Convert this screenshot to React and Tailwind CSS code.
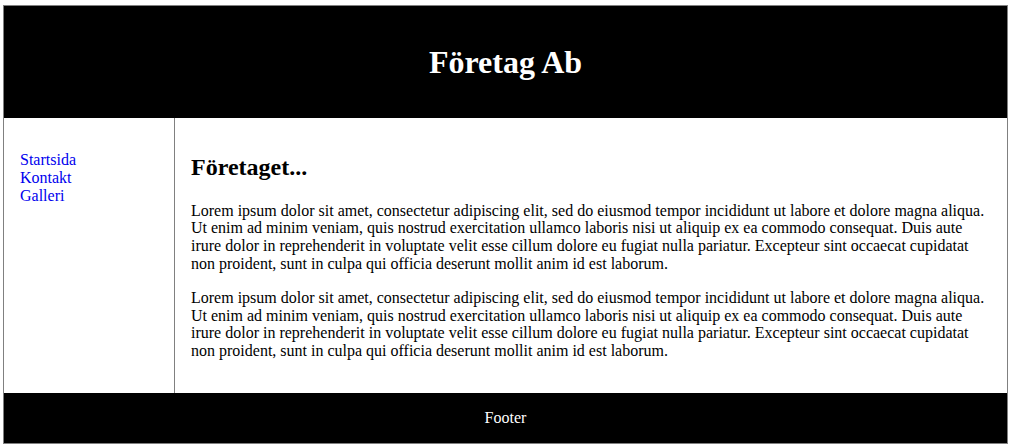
import React from 'react';

export default function App() {
  const lorem =
    'Lorem ipsum dolor sit amet, consectetur adipiscing elit, sed do eiusmod tempor incididunt ut labore et dolore magna aliqua. Ut enim ad minim veniam, quis nostrud exercitation ullamco laboris nisi ut aliquip ex ea commodo consequat. Duis aute irure dolor in reprehenderit in voluptate velit esse cillum dolore eu fugiat nulla pariatur. Excepteur sint occaecat cupidatat non proident, sunt in culpa qui officia deserunt mollit anim id est laborum.';

  return (
    <div className="min-h-screen bg-white pl-[3px] pt-[5px] font-['Liberation_Serif','Times_New_Roman',serif] text-[16px] leading-[1.15] text-black">
      <div className="w-[1005px] border border-[#808080]">
        {/* Header */}
        <header className="h-[112px] bg-black flex items-center justify-center">
          <h1 className="text-[32px] font-bold text-white">Företag Ab</h1>
        </header>

        {/* Body */}
        <div className="flex">
          <nav className="w-[171px] shrink-0 border-r border-[#808080] pl-4 pt-[33px]">
            <ul className="flex flex-col leading-[18px]">
              {['Startsida', 'Kontakt', 'Galleri'].map((l) => (
                <li key={l}>
                  <a href="#" className="text-[#0000ee]">{l}</a>
                </li>
              ))}
            </ul>
          </nav>

          <main className="flex-1 px-4 pt-[36px] pb-[17px]">
            <h2 className="text-[24px] font-bold mb-5">Företaget...</h2>
            <p className="mb-4 leading-[17.8px]">{lorem}</p>
            <p className="mb-4 leading-[17.8px]">{lorem}</p>
          </main>
        </div>

        {/* Footer */}
        <footer className="h-[50px] bg-black flex items-center justify-center text-white">
          Footer
        </footer>
      </div>
    </div>
  );
}
